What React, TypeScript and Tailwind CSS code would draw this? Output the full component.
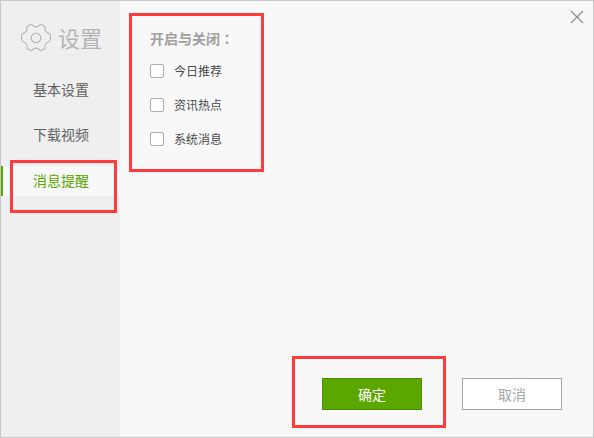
import React from 'react';

const font = { fontFamily: '"Noto Sans CJK SC", "Liberation Sans", sans-serif' };

function Gear() {
  return (
    <svg width="32" height="30" viewBox="0 0 32 30" fill="none" stroke="#b4b4b4" strokeWidth="1.1">
      <path d="M11.5 1.5c1.2 0 1.4 2.4 4.5 2.4s3.3-2.4 4.500-2.4c1.500 0 2.800.8 4 1.500 1.200.8-.2 2.800 1.300 5.200 1.500 2.400 3.900 1.700 4.300 3 .3 1.500.4 2.300.4 3.300s-.1 1.800-.4 3.300c-.4 1.300-2.800.6-4.300 3-1.500 2.400-.1 4.400-1.300 5.200-1.200.7-2.500 1.500-4 1.500-1.200 0-1.400-2.400-4.500-2.400s-3.300 2.400-4.500 2.400c-1.500 0-2.800-.8-4-1.500-1.200-.8.2-2.800-1.300-5.200-1.500-2.400-3.900-1.700-4.300-3-.3-1.500-.4-2.300-.4-3.300s.1-1.800.4-3.300c.4-1.300 2.800-.6 4.300-3 1.500-2.400.1-4.400 1.300-5.200 1.200-.7 2.500-1.500 4-1.500z" strokeLinejoin="round" />
      <circle cx="16" cy="15" r="4.800" />
    </svg>
  );
}

function Check({ label }: { label: string }) {
  return (
    <label className="flex items-center h-[16px]">
      <span className="w-[14px] h-[14px] border border-[#adadad] rounded-[2px] bg-white" />
      <span className="ml-[10px] text-[12px] text-[#4a4a4a]">{label}</span>
    </label>
  );
}

export default function App() {
  return (
    <div className="relative w-[594px] h-[438px] flex border border-[#c8c8c8] bg-[#f8f8f8] overflow-hidden" style={font}>
      <div className="w-[119px] h-full bg-[#efefef] flex flex-col">
        <div className="flex items-center pl-[19px] pt-[21px] h-[53px] gap-[6px]">
          <Gear />
          <span className="text-[22px] text-[#b4b4b4] leading-none mb-[3px]">设置</span>
        </div>
        <div className="mt-[13px] flex flex-col">
          <div className="h-[45px] pl-[32px] flex items-center text-[14px] text-[#606060]">基本设置</div>
          <div className="h-[45px] pl-[32px] flex items-center text-[14px] text-[#606060]">下载视频</div>
          <div className="h-[30px] mt-[9px] pl-[30px] pb-[2px] flex items-center text-[14px] text-[#5aa700] bg-[#f8f8f8] border-l-[2px] border-[#5aa700]">消息提醒</div>
        </div>
      </div>

      <div className="flex-1 flex flex-col pl-[30px] pt-[28px]">
        <div className="text-[14px] font-bold text-[#a0a0a0] leading-[18px]">开启与关闭<span className="font-['Noto_Sans_CJK_TC'] font-bold">：</span></div>
        <div className="mt-[16px] flex flex-col gap-[18px]">
          <Check label="今日推荐" />
          <Check label="资讯热点" />
          <Check label="系统消息" />
        </div>
        <div className="mt-auto mb-[27px] flex gap-[40px] pl-[172px]">
          <button className="w-[100px] h-[32px] bg-[#5aa700] border border-[#4f8f05] text-white text-[14px]">确定</button>
          <button className="w-[100px] h-[32px] bg-white border border-[#a5a5a5] text-[#a5a5a5] text-[14px]">取消</button>
        </div>
      </div>

      <svg className="absolute top-[9px] right-[9px]" width="14" height="14" viewBox="0 0 14 14" stroke="#8c8c8c" strokeWidth="1.2">
        <path d="M1 1l12 12M13 1L1 13" />
      </svg>

      {/* annotation boxes drawn over the dialog */}
      <div className="absolute left-[128px] top-[12px] w-[135px] h-[159px] border-[3px] border-[#ff3b3b]" />
      <div className="absolute left-[9px] top-[159px] w-[107px] h-[53px] border-[3px] border-[#ff3b3b]" />
      <div className="absolute left-[291px] top-[355px] w-[154px] h-[72px] border-[3px] border-[#ff3b3b]" />
    </div>
  );
}
